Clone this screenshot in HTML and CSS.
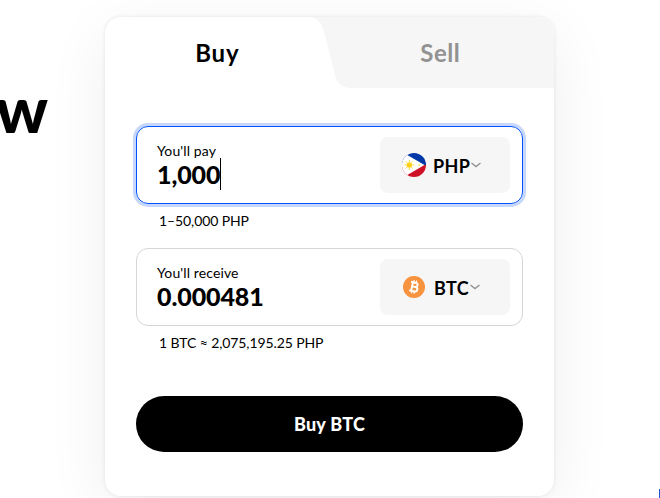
FILE: index.html
```html
<!DOCTYPE html>
<html lang="en">
<head>
<meta charset="utf-8">
<title>Buy BTC</title>
<link rel="stylesheet" href="styles.css">
</head>
<body>
<main class="page">
  <h1 class="headline"><span>w</span></h1>
  <section class="card">
    <nav class="tabs">
      <svg class="tab-shape" width="244" height="71" viewBox="0 0 244 71"><path d="M0 0H224Q244 0 244 20V71H41C32 71 27 66 25 58L14 15C12 6 7 1 0 0Z" fill="#f6f6f6"/></svg>
      <span class="tab active"><span class="t-buy">Buy</span></span>
      <span class="tab"><span class="t-sell">Sell</span></span>
    </nav>
    <div class="form">
      <div class="field focused">
        <div class="entry">
          <span class="label"><span class="t-pay">You'll pay</span></span>
          <span class="amount"><span class="t-amount">1,000</span><i class="caret"></i></span>
        </div>
        <div class="currency">
          <svg class="coin flag" width="24" height="24" viewBox="0 0 24 24">
            <defs><clipPath id="round"><circle cx="12" cy="12" r="12"/></clipPath></defs>
            <g clip-path="url(#round)">
              <path d="M0 0H24V12H0Z" fill="#0038a8"/>
              <path d="M0 12H24V24H0Z" fill="#ce1126"/>
              <path d="M-1 -1L4 1.2L22.5 12L4 22.8L-1 25Z" fill="#fff"/>
              <circle cx="7.3" cy="12" r="2.6" fill="#fcd116"/>
              <path d="M7.3 7V17M2.3 12H12.3M3.8 8.5L10.8 15.5M10.8 8.5L3.8 15.5" stroke="#fcd116" stroke-width=".8"/>
              <path d="M16.3 12H18.3M17.3 11V13" stroke="#f9df6d" stroke-width="1"/>
            </g>
          </svg>
          <span class="code t-php">PHP</span>
          <svg class="chevron" width="12" height="8" viewBox="0 0 12 8"><path d="M1.5 2L6 5.5L10.5 2" fill="none" stroke="#929292" stroke-width="1.4"/></svg>
        </div>
      </div>
      <p class="hint"><span class="t-range">1–50,000 PHP</span></p>
      <div class="field">
        <div class="entry">
          <span class="label"><span class="t-receive">You'll receive</span></span>
          <span class="amount"><span class="t-amount">0.000481</span></span>
        </div>
        <div class="currency">
          <svg class="coin" width="22" height="22" viewBox="0 0 22 22">
            <circle cx="11" cy="11" r="11" fill="#f7933f"/>
            <g transform="rotate(12 11 11)" fill="none" stroke="#fff">
              <path d="M7 6.5H12C14.8 6.5 14.8 10.7 12 10.7H9.2H12.4C15.6 10.7 15.6 15.3 12.4 15.3H7M9 6.5V15.3" stroke-width="1.9"/>
              <path d="M9.8 4.3V6.5M12.3 4.3V6.5M9.8 15V17.6M12.3 15V17.6" stroke-width="1.3"/>
            </g>
          </svg>
          <span class="code t-btc">BTC</span>
          <svg class="chevron" width="12" height="8" viewBox="0 0 12 8"><path d="M1.5 2L6 5.5L10.5 2" fill="none" stroke="#929292" stroke-width="1.4"/></svg>
        </div>
      </div>
      <p class="hint"><span class="t-rate">1 BTC ≈ 2,075,195.25 PHP</span></p>
      <button class="submit"><span class="t-submit">Buy BTC</span></button>
    </div>
  </section>
  <aside class="help"></aside>
</main>
</body>
</html>
```
FILE: styles.css
```css
* { box-sizing: border-box; }
body { margin: 0; background: #fff; color: #000; font-family: Lato, "Liberation Sans", sans-serif; overflow: hidden; }
.page { display: grid; grid-template-columns: 105px 449px 1fr; width: 660px; height: 498px; padding-top: 17px; position: relative; }
.headline { margin: 51px 0 0; height: 80px; font-size: 65px; line-height: 80px; font-weight: 900; display: flex; justify-content: flex-end; padding-right: 57px; }
.card { height: 479px; border-radius: 16px; background: #fff; box-shadow: 0 0 4px rgba(0,0,0,.09), 0 16px 64px rgba(0,0,0,.065); }
.tabs { position: relative; display: grid; grid-template-columns: 1fr 1fr; height: 71px; }
.tab-shape { position: absolute; right: 0; top: 0; }
.tab { position: relative; display: flex; align-items: center; justify-content: center; font-size: 24px; line-height: 30px; font-weight: 700; padding: 1px 3px 0 0; color: #929292; letter-spacing: .5px; }
.active { color: #000; padding-right: 0; letter-spacing: .8px; }
.form { padding: 38px 31px 0; }
.field { display: flex; justify-content: space-between; height: 78px; padding: 10px 12px 10px 20px; border: 1px solid #d6d6d6; border-radius: 12px; }
.focused { border-color: #0052ff; box-shadow: 0 0 0 3px #c6d7fb; }
.entry { padding-top: 5px; }
.label { display: block; font-size: 14px; line-height: 17px; letter-spacing: .12px; }
.amount { display: flex; align-items: center; height: 29px; font-size: 25px; font-weight: 900; letter-spacing: -.1px; }
.caret { width: 1px; height: 32px; background: #000; }
.currency { display: flex; align-items: center; width: 130px; height: 56px; border-radius: 8px; background: #f6f6f6; padding-left: 22px; }
.coin { flex: none; margin-right: 9px; margin-left: 1px; }
.flag { margin-left: 0; margin-right: 7px; }
.code { font-size: 18px; font-weight: 700; letter-spacing: .35px; padding-top: 1px; }
.chevron { flex: none; }
.hint { margin: 0; height: 44px; padding: 8px 0 0 23px; font-size: 14px; line-height: 18px; white-space: nowrap; letter-spacing: -.1px; }
.submit { display: flex; align-items: center; justify-content: center; width: 387px; height: 56px; margin-top: 26px; padding: 0; border: 0; border-radius: 28px; background: #000; color: #fff; font: 900 18px/24px Lato, sans-serif; letter-spacing: .2px; }
.help { position: absolute; right: 0; bottom: 0; width: 1px; height: 9px; background: #1b55d2; }
```
